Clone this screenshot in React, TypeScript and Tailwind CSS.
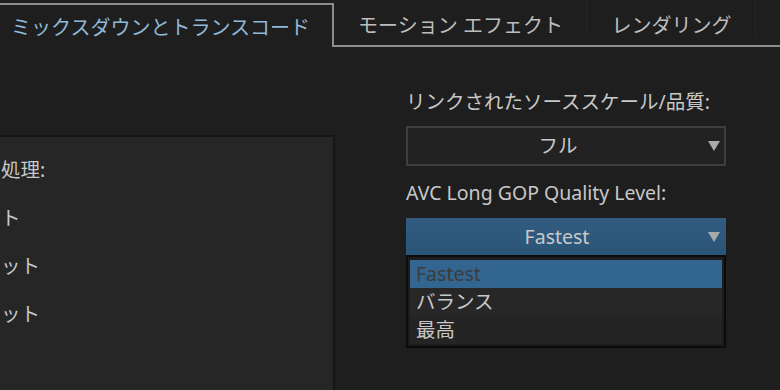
const font = { fontFamily: '"Noto Sans", "Noto Sans CJK JP", sans-serif' }

const leftRows = ['処理:', 'ト', 'ット', 'ット']
const levels = ['Fastest', 'バランス', '最高']

function Arrow() {
  return (
    <svg width="12" height="10" viewBox="0 0 12 10" className="shrink-0">
      <path d="M0 0 H12 L6 10 Z" fill="#a9a9a9" />
    </svg>
  )
}

export default function App() {
  return (
    <div
      className="w-[780px] h-[390px] bg-[#1e1e1e] overflow-hidden text-[#c8c8c8] text-[19.5px]"
      style={font}
    >
      {/* tabs */}
      <div className="flex h-[47px]">
        <div className="-ml-[10px] w-[344px] mt-[3px] border-t-2 border-r-2 border-[#8c8c8c] flex items-center pl-[21px] pt-[3px] text-[20px] text-[#8fb8d9]">
          ミックスダウンとトランスコード
        </div>
        <div className="flex-1 flex border-b-2 border-[#8c8c8c] text-[20px] text-[#bdbdbd]">
          <div className="relative w-[253px] flex items-center justify-center pt-[6px]">
            モーション エフェクト
            <span className="absolute right-0 top-0 h-[35px] w-px bg-[#272727]" />
          </div>
          <div className="relative w-[169px] flex items-center justify-center pt-[6px]">
            レンダリング
            <span className="absolute right-0 top-0 h-[35px] w-px bg-[#272727]" />
          </div>
          <div className="flex-1" />
        </div>
      </div>

      {/* body */}
      <div className="flex">
        <div className="-ml-[20px] w-[355px] mt-[88px] h-[300px] bg-[#262626] border-2 border-[#151515] pl-[19px] pt-[9px]">
          {leftRows.map((r, i) => (
            <div key={i} className="h-[48px] flex items-center">
              {r}
            </div>
          ))}
        </div>

        <div className="ml-[71px] w-[320px] flex flex-col">
          <div className="mt-[43px] h-[24px] leading-[24px]">リンクされたソーススケール/品質:</div>
          <div className="mt-[12px] h-[40px] bg-[#222222] border-2 border-[#3e3e3e] flex items-center pr-[4px]">
            <span className="flex-1 text-center">フル</span>
            <Arrow />
          </div>
          <div className="mt-[15px] h-[24px] leading-[24px]">AVC Long GOP Quality Level:</div>
          <div className="mt-[13px] h-[37px] bg-gradient-to-b from-[#315c80] to-[#2b5577] flex items-center pr-[6px]">
            <span className="flex-1 text-center">Fastest</span>
            <Arrow />
          </div>
          <div className="h-[93px] border-2 border-[#0b0b0b] bg-[#1c1c1c] px-[2px] pt-[3px]">
            {levels.map((l, i) => (
              <div
                key={l}
                className={
                  'h-[28px] flex items-center pl-[6px] ' +
                  (i === 0 ? 'bg-[#336591] text-[#3c3c3c]' : i === 1 ? 'bg-[#272727]' : 'bg-[#242424]')
                }
              >
                {l}
              </div>
            ))}
          </div>
        </div>
      </div>
    </div>
  )
}
